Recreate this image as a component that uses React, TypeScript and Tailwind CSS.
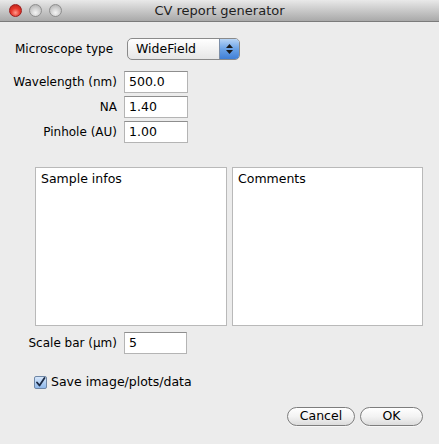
import React from "react";

const font = { fontFamily: '"DejaVu Sans", "Liberation Sans", sans-serif' };

function Light({ red }: { red?: boolean }) {
  return (
    <span
      className={
        "block w-[13px] h-[13px] rounded-full border " +
        (red
          ? "border-[#9c1b1b] bg-[radial-gradient(circle_at_50%_70%,#ff9a8c_0%,#e8382c_45%,#b21d14_100%)]"
          : "border-[#8e8e8e] bg-[radial-gradient(circle_at_50%_70%,#f4f4f4_0%,#cfcfcf_50%,#a9a9a9_100%)]")
      }
    />
  );
}

function Field({ value, w = "w-[64px]" }: { value: string; w?: string }) {
  return (
    <div
      className={`${w} h-[22px] bg-white border border-[#b4b4b4] border-t-[#8e8e8e] flex items-center pl-[4px] text-[12.5px] text-black`}
    >
      {value}
    </div>
  );
}

function Button({ label, w }: { label: string; w: string }) {
  return (
    <div
      className={`${w} h-[19px] rounded-full border border-[#7d7d7d] bg-gradient-to-b from-white via-[#f3f3f3] to-[#dcdcdc] flex items-center justify-center text-[12.5px] text-black shadow-[0_1px_0_rgba(255,255,255,0.6)]`}
    >
      {label}
    </div>
  );
}

export default function App() {
  return (
    <div className="w-[439px] h-[444px] bg-[#ececec] flex flex-col overflow-hidden text-[12px]" style={font}>
      {/* title bar */}
      <div className="h-[22px] relative flex items-center bg-gradient-to-b from-[#e9e9e9] to-[#a9a9a9] border-b border-[#7b7b7b]">
        <div className="flex gap-[7px] pl-[9px]">
          <Light red />
          <Light />
          <Light />
        </div>
        <div className="absolute inset-0 flex items-center justify-center text-[13px] text-[#1e1e1e]">
          CV report generator
        </div>
      </div>

      {/* microscope type */}
      <div className="flex items-center mt-[16px] pl-[15px]">
        <span className="text-black w-[112px]">Microscope type</span>
        <div className="w-[113px] h-[22px] rounded-[5px] border border-[#8a8a8a] bg-gradient-to-b from-white to-[#e6e6e6] flex items-stretch overflow-hidden">
          <span className="flex-1 flex items-center pl-[8px] text-[12.5px] text-black">WideField</span>
          <span className="w-[20px] bg-gradient-to-b from-[#b7d4f5] via-[#6aa2e6] to-[#3f7fd6] border-l border-[#7d8fa8] flex flex-col items-center justify-center gap-[2px]">
            <svg width="7" height="4" viewBox="0 0 7 4"><path d="M0 4 L3.5 0 L7 4 Z" fill="#1a1a1a" /></svg>
            <svg width="7" height="4" viewBox="0 0 7 4"><path d="M0 0 L3.5 4 L7 0 Z" fill="#1a1a1a" /></svg>
          </span>
        </div>
      </div>

      {/* numeric fields */}
      <div className="grid grid-cols-[117px_64px] gap-x-[7px] gap-y-[3px] items-center mt-[11px]">
        <span className="text-black text-right">Wavelength (nm)</span>
        <Field value="500.0" />
        <span className="text-black text-right">NA</span>
        <Field value="1.40" />
        <span className="text-black text-right">Pinhole (AU)</span>
        <Field value="1.00" />
      </div>

      {/* text areas */}
      <div className="flex gap-[5px] mt-[24px] pl-[35px]">
        <div className="w-[192px] h-[159px] bg-white border border-[#b9b9b9] px-[5px] pt-[2px] text-[12.5px] text-black">
          Sample infos
        </div>
        <div className="w-[191px] h-[159px] bg-white border border-[#b9b9b9] px-[5px] pt-[2px] text-[12.5px] text-black">
          Comments
        </div>
      </div>

      {/* scale bar */}
      <div className="grid grid-cols-[117px_63px] gap-x-[7px] items-center mt-[6px]">
        <span className="text-black text-right">Scale bar (µm)</span>
        <Field value="5" w="w-[63px]" />
      </div>

      {/* checkbox */}
      <div className="flex items-center gap-[4px] mt-[19px] pl-[34px]">
        <span className="w-[13px] h-[13px] rounded-[2px] border border-[#6f87a6] bg-gradient-to-b from-[#d7e7fb] to-[#8fb8ea] flex items-center justify-center">
          <svg width="11" height="11" viewBox="0 0 11 11">
            <path d="M2 5.5 L4.5 8.5 L9.5 1" stroke="#1b2a44" strokeWidth="1.8" fill="none" strokeLinecap="round" strokeLinejoin="round" />
          </svg>
        </span>
        <span className="text-[12.5px] text-black">Save image/plots/data</span>
      </div>

      {/* buttons */}
      <div className="flex justify-end gap-[5px] mt-[15px] pr-[16px]">
        <Button label="Cancel" w="w-[68px]" />
        <Button label="OK" w="w-[63px]" />
      </div>
    </div>
  );
}
